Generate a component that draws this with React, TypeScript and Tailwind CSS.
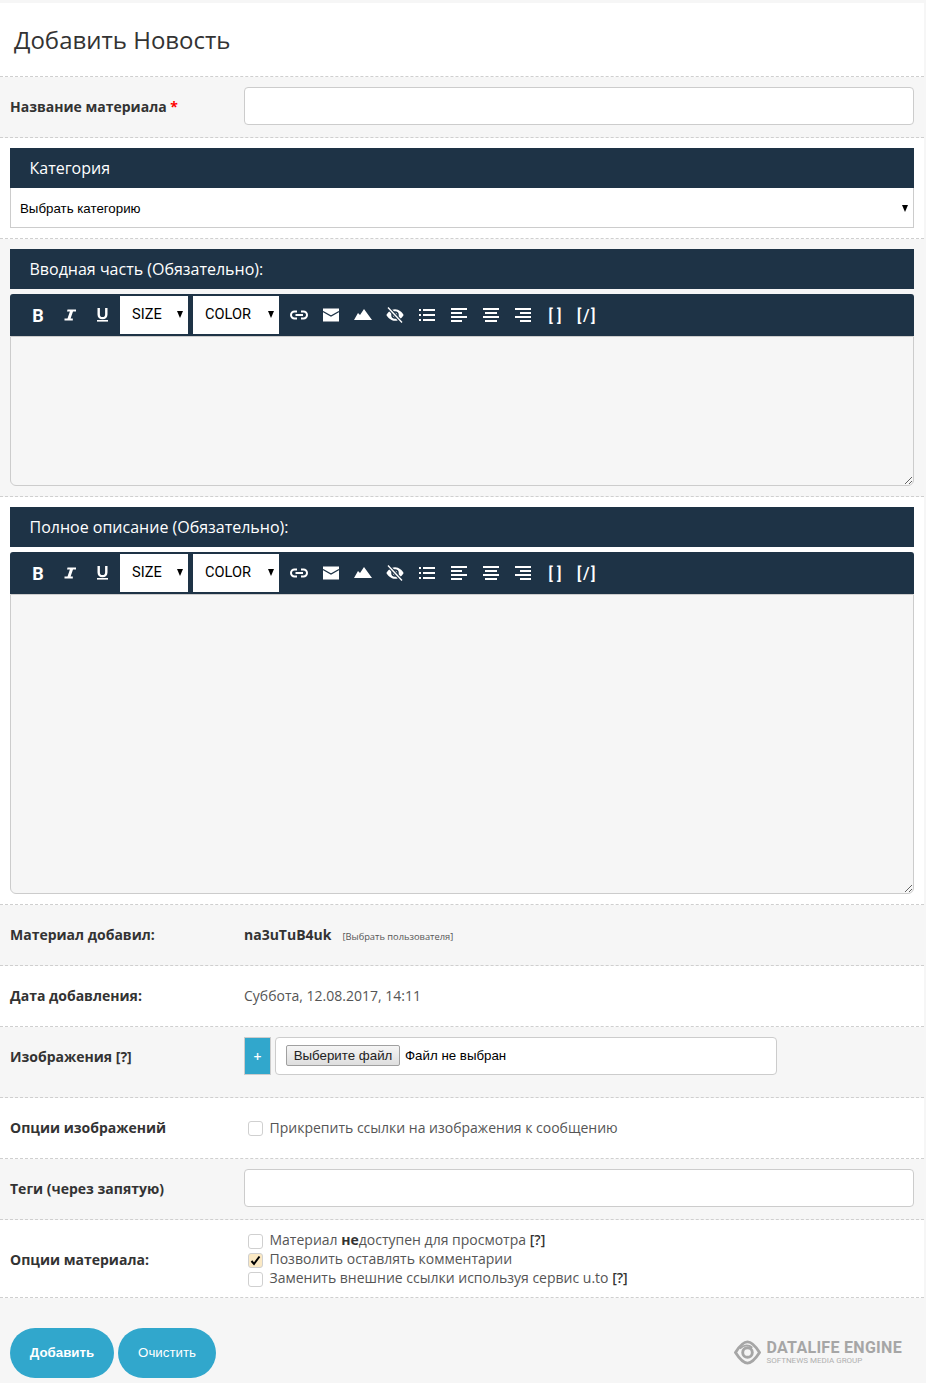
import React from "react";

function Row({ gray, className = "", children }: { gray?: boolean; className?: string; children: React.ReactNode }) {
  return (
    <div className={`border-b border-dashed border-[#cfcfcf] ${gray ? "bg-[#f6f6f6]" : "bg-white"} ${className}`}>
      {children}
    </div>
  );
}

function Label({ className = "", children }: { className?: string; children: React.ReactNode }) {
  return <div className={`w-[234px] shrink-0 text-[14px] font-bold text-[#333] [font-family:'Open_Sans',sans-serif] ${className}`}>{children}</div>;
}

function Bar({ children }: { children: React.ReactNode }) {
  return (
    <div className="h-10 bg-[#1e3346] pl-[19.5px] flex items-center text-[16px] text-white [font-family:'Open_Sans',sans-serif]">
      {children}
    </div>
  );
}

function Btn({ children }: { children: React.ReactNode }) {
  return <button className="w-8 h-[38px] flex items-center justify-center text-white shrink-0">{children}</button>;
}

const ic = { width: 18, height: 18, viewBox: "0 0 18 18", fill: "white" };

function Toolbar() {
  return (
    <div className="h-[42px] bg-[#1e3346] rounded-t-[3px] pl-3 flex items-center">
      <Btn><span className="text-[18px] font-bold [font-family:'Roboto',sans-serif]">B</span></Btn>
      <Btn>
        <svg {...ic}><path d="M6.500 3.500h8.500v1.900h-3L9.600 12.600h2.200v1.900H3.500v-1.900h3L8.900 5.400H6z" /></svg>
      </Btn>
      <Btn>
        <svg {...ic}>
          <path d="M4.500 2h2.400v6.500c0 1.600.9 2.600 2.600 2.600s2.600-1 2.600-2.600V2h2.400v6.500c0 3-1.900 4.700-5 4.700s-5-1.700-5-4.700z" />
          <rect x="4" y="14" width="11" height="1.600" />
        </svg>
      </Btn>
      <div className="ml-0.5 w-[68px] h-[38px] bg-white flex items-center pl-3 relative text-[14.6px] text-black [font-family:'Roboto',sans-serif]">
        SIZE<span className="absolute right-[5px] top-[15px] border-x-[3.5px] border-t-[7px] border-x-transparent border-t-black" />
      </div>
      <div className="ml-[5px] w-[86px] h-[38px] bg-white flex items-center pl-3 relative text-[14.6px] text-black [font-family:'Roboto',sans-serif]">
        COLOR<span className="absolute right-[5px] top-[15px] border-x-[3.5px] border-t-[7px] border-x-transparent border-t-black" />
      </div>
      <div className="ml-1 flex items-center">
        <Btn>
          <svg {...ic} fill="none" stroke="white" strokeWidth="2">
            <path d="M7.500 5.500H5a3.500 3.500 0 0 0 0 7h2.500" transform="translate(-0.5 0)" />
            <path d="M11 5.500h2.500a3.500 3.500 0 0 1 0 7H11" />
            <path d="M5.500 9h7.500" />
          </svg>
        </Btn>
        <Btn>
          <svg {...ic}>
            <rect x="1" y="2.500" width="16" height="13" />
            <path d="M1 5.500 9 10l8-4.500" fill="none" stroke="#1e3346" strokeWidth="1.400" />
          </svg>
        </Btn>
        <Btn>
          <svg {...ic}>
            <path d="M0 14 4 7l2 2 4-6 8 11z" />
          </svg>
        </Btn>
        <Btn>
          <svg {...ic}>
            <path d="M9 3.200C4.800 3.200 1.800 6.500.4 9c1.400 2.500 4.400 5.800 8.600 5.800s7.200-3.300 8.600-5.800C16.200 6.500 13.200 3.200 9 3.200z" />
            <circle cx="9" cy="9" r="3" fill="none" stroke="#1e3346" strokeWidth="1.500" />
            <path d="M2 1.500 16 16.500" stroke="#1e3346" strokeWidth="3.400" />
            <path d="M2 1.500 16 16.500" stroke="white" strokeWidth="1.400" />
          </svg>
        </Btn>
        <Btn>
          <svg {...ic}>
            <rect x="1" y="3" width="2" height="2" /><rect x="5" y="3" width="12" height="2" />
            <rect x="1" y="8" width="2" height="2" /><rect x="5" y="8" width="12" height="2" />
            <rect x="1" y="13" width="2" height="2" /><rect x="5" y="13" width="12" height="2" />
          </svg>
        </Btn>
        <Btn>
          <svg {...ic}>
            <rect x="1" y="2" width="16" height="2" /><rect x="1" y="6" width="11" height="2" />
            <rect x="1" y="10" width="16" height="2" /><rect x="1" y="14" width="11" height="2" />
          </svg>
        </Btn>
        <Btn>
          <svg {...ic}>
            <rect x="1" y="2" width="16" height="2" /><rect x="3" y="6" width="12" height="2" />
            <rect x="1" y="10" width="16" height="2" /><rect x="3" y="14" width="12" height="2" />
          </svg>
        </Btn>
        <Btn>
          <svg {...ic}>
            <rect x="1" y="2" width="16" height="2" /><rect x="6" y="6" width="11" height="2" />
            <rect x="1" y="10" width="16" height="2" /><rect x="6" y="14" width="11" height="2" />
          </svg>
        </Btn>
        <Btn><span className="text-[17px] font-medium [font-family:'Roboto',sans-serif] pt-[1px]">[ ]</span></Btn>
        <Btn><span className="text-[17px] font-medium tracking-[1.5px] [font-family:'Roboto',sans-serif] pt-[1px]">[/]</span></Btn>
      </div>
    </div>
  );
}

function Area({ h }: { h: string }) {
  return (
    <textarea
      className={`block w-full ${h} bg-[#f6f6f6] border border-[#cccccc] rounded-b-[6px] outline-none`}
    />
  );
}

function Check({ on }: { on?: boolean }) {
  return (
    <span className={`w-[15px] h-[15px] mt-[3px] rounded-[3px] border border-[#d0d0d0] flex items-center justify-center shrink-0 ${on ? "bg-[#fbe9c4]" : "bg-white"}`}>
      {on && (
        <svg width="11" height="11" viewBox="0 0 11 11" fill="none" stroke="black" strokeWidth="2">
          <path d="M1.500 6 4 9 9.500 1.500" />
        </svg>
      )}
    </span>
  );
}

function Opt({ on, children }: { on?: boolean; children: React.ReactNode }) {
  return (
    <div className="h-[19px] flex items-center pl-[3.5px] gap-[7px] text-[14px] text-[#555] [font-family:'Open_Sans',sans-serif]">
      <Check on={on} />
      <span>{children}</span>
    </div>
  );
}

export default function App() {
  return (
    <div className="min-h-[1383px] bg-[#f6f6f6] pt-[3px]">
      <div className="w-[924px] bg-white">
        <Row className="h-[74px] flex items-center pl-[14px]">
          <h1 className="text-[24px] leading-none text-[#333] font-normal pt-[1px] [font-family:'Open_Sans',sans-serif]">Добавить Новость</h1>
        </Row>

        <Row gray className="h-[61px] flex items-start pl-2.5 pt-2.5 pr-2.5">
          <div className="h-[38px] flex items-center">
            <Label>Название материала <span className="text-[#f00]">*</span></Label>
          </div>
          <input className="h-[38px] flex-1 bg-white border border-[#ccc] rounded-[4px] outline-none" />
        </Row>

        <Row className="h-[101px] p-2.5">
          <Bar>Категория</Bar>
          <div className="relative">
            <select className="block w-full h-10 appearance-none bg-white border border-t-0 border-[#ccc] pl-[9px] pt-[3px] text-[13.3px] text-black outline-none [font-family:'Liberation_Sans',sans-serif]">
              <option>Выбрать категорию</option>
            </select>
            <span className="absolute right-[6px] top-[17px] border-x-[3.5px] border-t-[7px] border-x-transparent border-t-black" />
          </div>
        </Row>

        <Row gray className="p-2.5">
          <Bar>Вводная часть (Обязательно):</Bar>
          <div className="mt-[5px]"><Toolbar /></div>
          <Area h="h-[150px]" />
        </Row>

        <Row className="p-2.5">
          <Bar>Полное описание (Обязательно):</Bar>
          <div className="mt-[5px]"><Toolbar /></div>
          <Area h="h-[300px]" />
        </Row>

        <Row gray className="h-[61px] flex items-center pl-2.5 pb-[2px]">
          <Label>Материал добавил:</Label>
          <span className="text-[14px] font-bold text-[#333] [font-family:'Open_Sans',sans-serif]">na3uTuB4uk</span>
          <span className="ml-[11px] mt-[5px] text-[9.3px] text-[#555] [font-family:'Open_Sans',sans-serif]">[Выбрать пользователя]</span>
        </Row>

        <Row className="h-[61px] flex items-center pl-2.5 pb-[2px]">
          <Label>Дата добавления:</Label>
          <span className="text-[14px] text-[#555] [font-family:'Open_Sans',sans-serif]">Суббота, 12.08.2017, 14:11</span>
        </Row>

        <Row gray className="h-[71px] flex items-start pl-2.5 pt-2.5">
          <div className="h-[38px] flex items-center">
            <Label>Изображения [?]</Label>
          </div>
          <div className="w-[27px] h-[38px] bg-[#31a7cc] border border-[#ccc] flex items-center justify-center text-[14px] font-semibold text-white [font-family:'Open_Sans',sans-serif]">+</div>
          <div className="ml-1 w-[502px] h-[38px] bg-white border border-[#ccc] rounded-[4px] flex items-center pl-[10px] pb-[2px] text-[13.3px] text-black [font-family:'Liberation_Sans',sans-serif]">
            <button className="h-[21px] w-[114px] border border-[#a0a0a0] rounded-[2px] bg-gradient-to-b from-[#f5f5f5] to-[#dedede] text-[#222]">Выберите файл</button>
            <span className="ml-[5px] pt-[1px]">Файл не выбран</span>
          </div>
        </Row>

        <Row className="h-[61px] flex items-center pl-2.5 pb-[2px]">
          <Label>Опции изображений</Label>
          <Opt>Прикрепить ссылки на изображения к сообщению</Opt>
        </Row>

        <Row gray className="h-[61px] flex items-start pl-2.5 pr-2.5 pt-2.5">
          <div className="h-[38px] flex items-center">
            <Label>Теги (через запятую)</Label>
          </div>
          <input className="h-[38px] flex-1 bg-white border border-[#ccc] rounded-[4px] outline-none" />
        </Row>

        <Row className="h-[78px] flex items-center pl-2.5">
          <Label className="mt-[2px]">Опции материала:</Label>
          <div className="flex flex-col">
            <Opt>Материал <b className="text-[#333]">не</b>доступен для просмотра <b className="font-semibold text-[#333]">[?]</b></Opt>
            <Opt on>Позволить оставлять комментарии</Opt>
            <Opt>Заменить внешние ссылки используя сервис u.to <b className="font-semibold text-[#333]">[?]</b></Opt>
          </div>
        </Row>

        <div className="h-[85px] bg-[#f6f6f6] flex items-start justify-between pl-2.5 pt-[30px] pr-[22px]">
          <div className="flex gap-1 [font-family:'Liberation_Sans',sans-serif] text-[13.3px] text-white">
            <button className="w-[104px] h-[50px] rounded-[25px] bg-[#31a7cc] font-bold">Добавить</button>
            <button className="w-[98px] h-[50px] rounded-[25px] bg-[#31a7cc]">Очистить</button>
          </div>
          <div className="flex items-center gap-[5px] mt-[11px]">
            <svg width="27" height="25" viewBox="0 0 28 26" fill="none" stroke="#a6a6a6" strokeWidth="3">
              <path d="M1.500 13C5 7.500 9 2 14 2s9 5.500 12.500 11C23 18.500 19 24 14 24S5 18.500 1.500 13z" />
              <circle cx="14" cy="13" r="5" />
              <path d="M6 9c3-3 8-5 13-1" strokeWidth="2" />
            </svg>
            <div className="flex flex-col pt-[1px]">
              <span className="text-[16px] leading-[16px] font-bold tracking-[0.3px] text-[#a6a6a6] [font-family:'Roboto',sans-serif]">DATALIFE ENGINE</span>
              <span className="text-[8px] leading-[10px] text-[#b0b0b0] [font-family:'Roboto',sans-serif]">SOFTNEWS MEDIA GROUP</span>
            </div>
          </div>
        </div>
      </div>
    </div>
  );
}
